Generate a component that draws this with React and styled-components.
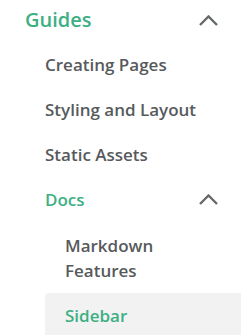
import styled, { createGlobalStyle } from "styled-components";

const Global = createGlobalStyle`
  body {
    margin: 0;
    background: #fff;
    font-family: "Open Sans", "Noto Sans", sans-serif;
  }
`;

const Nav = styled.nav`
  width: 241px;
  display: flex;
  flex-direction: column;
`;

const GroupHead = styled.div`
  display: flex;
  align-items: center;
  justify-content: space-between;
  padding: ${(p) => (p.top ? "6px 23px 8px 25px" : "10px 23px 10px 45px")};
  font-size: ${(p) => (p.top ? "20px" : "17px")};
  line-height: ${(p) => (p.top ? "28px" : "25px")};
  font-weight: 600;
  color: #3daf84;
`;

const Item = styled.a`
  display: block;
  margin-left: ${(p) => (p.nested ? "45px" : "0")};
  padding: 10px 0 10px ${(p) => (p.nested ? "20px" : "45px")};
  padding-right: 20px;
  font-size: 17px;
  line-height: 25px;
  font-weight: 600;
  color: ${(p) => (p.active ? "#3daf84" : "#575a5c")};
  background: ${(p) => (p.active ? "#f2f2f2" : "transparent")};
  border-radius: 4px 0 0 4px;
  text-decoration: none;
`;

const Nested = styled.div`
  display: flex;
  flex-direction: column;
  padding-top: 1px;
`;

const Chevron = () => (
  <svg width="19" height="11" viewBox="0 0 19 11" fill="none">
    <polyline
      points="1,10 9.5,1.5 18,10"
      stroke="#66696b"
      strokeWidth="2.4"
    />
  </svg>
);

export default function App() {
  return (
    <Nav>
      <Global />
      <GroupHead top>
        Guides
        <Chevron />
      </GroupHead>
      <Item>Creating Pages</Item>
      <Item>Styling and Layout</Item>
      <Item>Static Assets</Item>
      <GroupHead>
        Docs
        <Chevron />
      </GroupHead>
      <Nested>
        <Item nested>
          Markdown
          <br />
          Features
        </Item>
        <Item nested active>
          Sidebar
        </Item>
      </Nested>
    </Nav>
  );
}
